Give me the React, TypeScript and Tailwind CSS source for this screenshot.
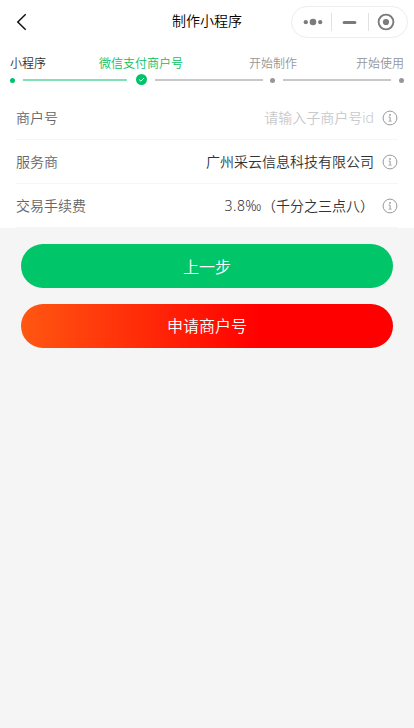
import { useState } from 'react';
import clsx from 'clsx';

type Field = {
  label: string;
  rate?: string;
  value?: string;
  placeholder?: string;
};

const fields: Field[] = [
  { label: '商户号', placeholder: '请输入子商户号id' },
  { label: '服务商', value: '广州采云信息科技有限公司' },
  { label: '交易手续费', rate: '3.8‰', value: '（千分之三点八）' },
];

const steps = ['小程序', '微信支付商户号', '开始制作', '开始使用'];

function InfoIcon() {
  return (
    <svg className="w-4 h-4 shrink-0" viewBox="0 0 16 16" fill="none" stroke="#999999">
      <circle cx="8" cy="8" r="6.9" strokeWidth="1" />
      <circle cx="8" cy="4.9" r="0.9" fill="#999999" stroke="none" />
      <path d="M6.6 7.1H8.1V11" strokeWidth="1" />
      <path d="M6.4 11.2H9.7" strokeWidth="0.7" />
    </svg>
  );
}

function Capsule() {
  return (
    <div className="flex items-center w-[117px] h-8 rounded-full border border-[#ededed] bg-white">
      <svg className="w-full h-full" viewBox="0 0 115 30" fill="#7b7b7b">
        <circle cx="13.8" cy="15.2" r="2.1" />
        <circle cx="21" cy="15" r="3.3" />
        <circle cx="28.2" cy="15.2" r="2.1" />
        <rect x="39" y="6" width="1" height="18" fill="#e2e2e2" />
        <rect x="50.6" y="14" width="13.8" height="3" rx="1.5" />
        <rect x="76" y="6" width="1" height="18" fill="#e2e2e2" />
        <circle cx="94" cy="15" r="7.4" fill="none" stroke="#7b7b7b" strokeWidth="1.9" />
        <circle cx="94" cy="15" r="3.1" />
      </svg>
    </div>
  );
}

function Steps({ active }: { active: number }) {
  return (
    <div className="h-[52px] px-2.5 pt-[11px]">
      <div className="flex text-xs leading-[18px] whitespace-nowrap text-[#969799]">
        {steps.map((step, i) => (
          <span
            key={step}
            className={clsx(
              i === 0 && 'w-[89px] text-[#323233]',
              i === 1 && 'w-[150px]',
              i === 3 && 'ml-auto',
              i === active && 'text-[#07c160]'
            )}
          >
            {step}
          </span>
        ))}
      </div>
      <div className="flex items-center h-3 mt-px">
        <i className="w-[5px] h-[5px] rounded-full bg-[#00c469]" />
        <i className="w-[104px] h-0.5 ml-2 bg-[#7fe1b4]" />
        <svg className="w-[11px] h-[11px] ml-[9px] -mt-px" viewBox="0 0 11 11" fill="none">
          <circle cx="5.5" cy="5.5" r="5.5" fill="#00c469" />
          <path d="M3.2 5.6L4.9 7.2L8 4" stroke="#ffffff" />
        </svg>
        <i className="w-[108px] h-0.5 ml-2 bg-[#c8c8c8]" />
        <i className="w-[5px] h-[5px] ml-[7px] rounded-full bg-[#969799]" />
        <i className="w-[108px] h-0.5 ml-2 bg-[#c8c8c8]" />
        <i className="w-[5px] h-[5px] ml-2 rounded-full bg-[#969799]" />
      </div>
    </div>
  );
}

export default function App() {
  const [merchantId, setMerchantId] = useState('');

  return (
    <div className="min-h-screen bg-[#f5f5f5] font-[350] font-['Noto_Sans','Noto_Sans_CJK_SC',sans-serif]">
      <div className="bg-white">
        <header className="grid grid-cols-[1fr_auto_1fr] items-center h-11 pl-4 pr-1.5">
          <button aria-label="返回">
            <svg className="w-3 h-[18px]" viewBox="0 0 12 18" fill="none">
              <path d="M9.7 1.3L1.8 9L9.7 16.7" stroke="#111111" strokeWidth="1.5" />
            </svg>
          </button>
          <h1 className="-ml-[10px] w-[70px] -mt-0.5 font-[350] text-sm whitespace-nowrap text-black">
            制作小程序
          </h1>
          <div className="justify-self-end">
            <Capsule />
          </div>
        </header>

        <Steps active={1} />

        <div className="px-4 text-sm">
          {fields.map((field) => (
            <div key={field.label} className="flex items-center h-11 border-b border-[#f5f5f5]">
              <span className="text-[#646566]">{field.label}</span>
              {field.value ? (
                <span className="ml-auto mr-2 text-[#323233]">
                  {field.rate && <span className="tracking-[0.5px]">{field.rate}</span>}
                  {field.value}
                </span>
              ) : (
                <input
                  value={merchantId}
                  onChange={(e) => setMerchantId(e.target.value)}
                  placeholder={field.placeholder}
                  className="flex-1 min-w-0 mr-2 text-right text-[#323233] placeholder:text-[#c8c9cc] outline-none"
                />
              )}
              <InfoIcon />
            </div>
          ))}
        </div>
      </div>

      <div className="flex flex-col gap-4 px-[21px] pt-4 text-base text-white">
        <button className="h-11 pt-0.5 rounded-full bg-[#00c569]">上一步</button>
        <button className="h-11 rounded-full bg-[linear-gradient(90deg,#ff5711_0%,#ff0000_64%)]">
          申请商户号
        </button>
      </div>
    </div>
  );
}
